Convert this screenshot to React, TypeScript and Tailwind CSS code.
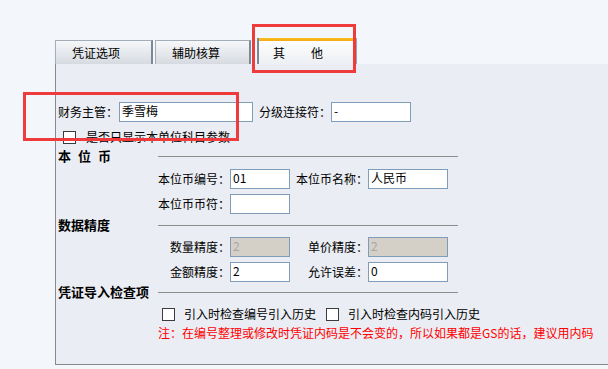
function Field({ value, width, disabled }: { value: string; width: string; disabled?: boolean }) {
  return (
    <div
      className={`${width} h-[20px] flex-none border border-[#7f9db9] px-[2px] leading-[16px] text-[12px] ${
        disabled ? "bg-[#d4d0c8] text-[#a8a8a8]" : "bg-white text-black"
      }`}
    >
      {value}
    </div>
  );
}

function Box() {
  return <span className="inline-block w-[13px] h-[13px] flex-none border border-[#3c3c3c] bg-white" />;
}

function Heading({ children }: { children: React.ReactNode }) {
  return (
    <div className="flex items-center h-[16px]">
      <div className="w-[100px] flex-none text-[13px] font-bold leading-[16px]">{children}</div>
      <div className="w-[300px] h-px flex-none bg-[#8c8c8c]" />
    </div>
  );
}

function Row({ l1, v1, l2, v2, dis }: { l1: string; v1: string; l2?: string; v2?: string; dis?: boolean }) {
  return (
    <div className="flex items-center h-[20px]">
      <div className="w-[172px] flex-none text-right">{l1}</div>
      <Field value={v1} width="w-[60px]" disabled={dis} />
      {l2 && (
        <>
          <div className="w-[78px] flex-none text-right">{l2}</div>
          <Field value={v2 ?? ""} width="w-[80px]" disabled={dis} />
        </>
      )}
    </div>
  );
}

export default function App() {
  return (
    <div className="relative w-[608px] h-[369px] overflow-hidden bg-[#f3f6fb] font-['Noto_Sans_CJK_SC',sans-serif] text-[12px] leading-[14px] text-black">
      <div className="pt-[38px] pl-[55px]">
        {/* tabs */}
        <div className="flex items-end h-[26px]">
          <div className="w-[98px] h-[24px] flex items-center pl-[16px] border-t border-l border-[#a4adb8] border-r-2 border-r-[#7d8895] bg-gradient-to-b from-[#f6f7f9] to-[#d6dbe1]">
            凭证选项
          </div>
          <div className="ml-[2px] w-[96px] h-[24px] flex items-center pl-[16px] border-t border-l border-[#a4adb8] border-r-2 border-r-[#7d8895] bg-gradient-to-b from-[#f6f7f9] to-[#d6dbe1]">
            辅助核算
          </div>
          <div className="ml-[6px] w-[100px] h-[26px] flex flex-col border-l-2 border-[#7d8895] border-r-2 border-r-[#9aa4b0] bg-gradient-to-b from-white to-[#edf0f4]">
            <div className="h-[3px] bg-gradient-to-b from-[#f7c21a] to-[#f4a81c]" />
            <div className="flex-1 flex items-center pl-[14px] gap-[26px]">
              <span>其</span>
              <span>他</span>
            </div>
          </div>
        </div>

        {/* panel */}
        <div className="h-[301px] border-l border-b border-[#8a8a8a] bg-[#eaedf3] pl-[2px] pt-[38px]">
          <div className="flex items-center h-[20px]">
            <span className="w-[60px] flex-none">财务主管：</span>
            <div className="ml-[1px]">
              <Field value="季雪梅" width="w-[134px]" />
            </div>
            <span className="ml-[6px] w-[72px] flex-none">分级连接符：</span>
            <Field value="-" width="w-[80px]" />
          </div>

          <div className="mt-[8px] h-[14px] flex items-center pl-[5px]">
            <Box />
            <span className="ml-[10px]">是否只显示本单位科目参数</span>
          </div>

          <div className="mt-[4px]">
            <Heading>
              <span className="flex gap-[7px]">
                <span>本</span>
                <span>位</span>
                <span>币</span>
              </span>
            </Heading>
          </div>
          <div className="mt-[5px]">
            <Row l1="本位币编号：" v1="01" l2="本位币名称：" v2="人民币" />
          </div>
          <div className="mt-[5px]">
            <Row l1="本位币币符：" v1="" />
          </div>

          <div className="mt-[3px]">
            <Heading>数据精度</Heading>
          </div>
          <div className="mt-[4px]">
            <Row l1="数量精度：" v1="2" l2="单价精度：" v2="2" dis />
          </div>
          <div className="mt-[5px]">
            <Row l1="金额精度：" v1="2" l2="允许误差：" v2="0" />
          </div>

          <div className="mt-[2px]">
            <Heading>凭证导入检查项</Heading>
          </div>
          <div className="mt-[7px] h-[14px] flex items-center pl-[104px]">
            <Box />
            <span className="ml-[9px]">引入时检查编号引入历史</span>
            <span className="ml-[10px] flex items-center">
              <Box />
            </span>
            <span className="ml-[9px]">引入时检查内码引入历史</span>
          </div>
          <div className="mt-[5px] h-[14px] pl-[100px] whitespace-nowrap text-[#ff0000]">
            注：在编号整理或修改时凭证内码是不会变的，所以如果都是GS的话，建议用内码
          </div>
        </div>
      </div>

      {/* highlight boxes */}
      <div className="absolute left-[252px] top-[24px] w-[104px] h-[49px] border-[3px] border-[#ef3b3b]" />
      <div className="absolute left-[23px] top-[92px] w-[216px] h-[49px] border-[3px] border-[#ef3b3b]" />
    </div>
  );
}
